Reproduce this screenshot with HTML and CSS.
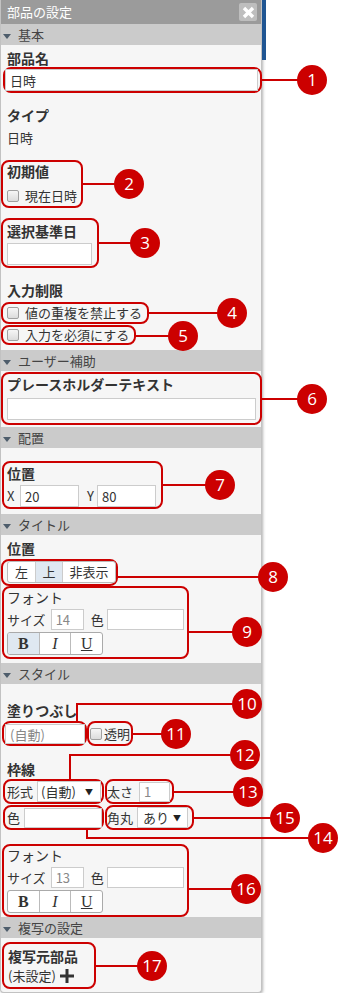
FILE: index.html
```html
<!DOCTYPE html>
<html lang="ja">
<head>
<meta charset="UTF-8">
<meta name="viewport" content="width=device-width, initial-scale=1.0">
<title>部品の設定</title>
<link rel="stylesheet" href="styles.css">
</head>
<body>

<div class="panel">
<div class="panel-title">
<span>部品の設定</span>
<span class="close"><svg width="13" height="13" viewBox="0 0 13 13"><path d="M2 2L11 11M11 2L2 11" stroke="#fff" stroke-width="3.4"/></svg></span>
</div>

<div class="sec-head"><i class="tri"></i>基本</div>
<div class="sec-body sb-basic">
<div class="label l-name">部品名</div>
<div class="mark m1">
<input class="text" value="日時">
<span class="co co1"><b>1</b></span>
</div>
<div class="label l-type">タイプ</div>
<div class="value">日時</div>
<div class="mark m2">
<div class="label">初期値</div>
<label class="check"><input type="checkbox">現在日時</label>
<span class="co co2"><b>2</b></span>
</div>
<div class="mark m3">
<div class="label">選択基準日</div>
<input class="text">
<span class="co co3"><b>3</b></span>
</div>
<div class="label l-limit">入力制限</div>
<div class="mark m4">
<label class="check"><input type="checkbox">値の重複を禁止する</label>
<span class="co co4"><b>4</b></span>
</div>
<div class="mark m5">
<label class="check"><input type="checkbox">入力を必須にする</label>
<span class="co co5"><b>5</b></span>
</div>
</div>

<div class="sec-head"><i class="tri"></i>ユーザー補助</div>
<div class="sec-body sb-help">
<div class="mark m6">
<div class="label">プレースホルダーテキスト</div>
<input class="text">
<span class="co co6"><b>6</b></span>
</div>
</div>

<div class="sec-head"><i class="tri"></i>配置</div>
<div class="sec-body sb-place">
<div class="mark m7">
<div class="label">位置</div>
<div class="xy">
<span class="xy-x">X</span><input class="text" value="20">
<span class="xy-y">Y</span><input class="text" value="80">
</div>
<span class="co co7"><b>7</b></span>
</div>
</div>

<div class="sec-head"><i class="tri"></i>タイトル</div>
<div class="sec-body sb-title">
<div class="label l-pos">位置</div>
<div class="mark m8">
<div class="seg">
<span>左</span><span class="on">上</span><span>非表示</span>
</div>
<span class="co co8"><b>8</b></span>
</div>
<div class="mark m9 font-box">
<div class="font-label">フォント</div>
<div class="size-row">
<span>サイズ</span><input class="text size" placeholder="14">
<span class="color-label">色</span><input class="text color">
</div>
<div class="biu">
<span class="on"><b>B</b></span><span><i>I</i></span><span><u>U</u></span>
</div>
<span class="co co9"><b>9</b></span>
</div>
</div>

<div class="sec-head"><i class="tri"></i>スタイル</div>
<div class="sec-body sb-style">
<div class="label l-fill">塗りつぶし</div>
<div class="pair">
<div class="mark m10">
<input class="text" placeholder="(自動)">
<span class="co-elbow co10"><b>10</b></span>
</div>
<div class="mark m11">
<label class="check"><input type="checkbox">透明</label>
<span class="co co11"><b>11</b></span>
</div>
</div>
<div class="label l-line">枠線</div>
<div class="pair p-line">
<div class="mark m12">
<span>形式</span><span class="select">(自動)<i>▼</i></span>
<span class="co-elbow co12"><b>12</b></span>
</div>
<div class="mark m13">
<span>太さ</span><input class="text weight" placeholder="1">
<span class="co co13"><b>13</b></span>
</div>
</div>
<div class="pair p-line">
<div class="mark m14">
<span>色</span><input class="text">
<span class="co-elbow co14"><b>14</b></span>
</div>
<div class="mark m15">
<span>角丸</span><span class="select">あり<i>▼</i></span>
<span class="co co15"><b>15</b></span>
</div>
</div>
<div class="mark m16 font-box">
<div class="font-label">フォント</div>
<div class="size-row">
<span>サイズ</span><input class="text size" placeholder="13">
<span class="color-label">色</span><input class="text color">
</div>
<div class="biu">
<span><b>B</b></span><span><i>I</i></span><span><u>U</u></span>
</div>
<span class="co co16"><b>16</b></span>
</div>
</div>

<div class="sec-head"><i class="tri"></i>複写の設定</div>
<div class="sec-body sb-copy">
<div class="mark m17">
<div class="label">複写元部品</div>
<div class="unset">(未設定)<svg width="16" height="16" viewBox="0 0 16 16"><path d="M8 1V15M1 8H15" stroke="#333" stroke-width="3"/></svg></div>
<span class="co co17"><b>17</b></span>
</div>
</div>
</div>

<div class="app-edge"></div>

</body>
</html>
```

FILE: styles.css
```css
* {
box-sizing: border-box;
}
body {
margin: 0;
display: flex;
align-items: flex-start;
background: #fff;
font-family: "Noto Sans CJK JP", "Noto Sans", sans-serif;
font-size: 13px;
line-height: 18px;
color: #333;
}
.panel {
width: 262px;
background: #f6f6f6;
border: 1px solid #c2c2c2;
border-top: 0;
border-radius: 0 0 4px 4px;
box-shadow: 1px 1px 3px rgba(0, 0, 0, 0.3);
}
.app-edge {
width: 4px;
height: 60px;
background: #1f5592;
}

/* title bar */
.panel-title {
height: 24px;
display: flex;
align-items: center;
justify-content: space-between;
padding: 0 4px 0 6px;
background: #9b9b9b;
color: #fff;
font-size: 13px;
}
.close {
width: 18px;
height: 18px;
display: flex;
align-items: center;
justify-content: center;
background: #bebebe;
border-radius: 2px;
}

/* section headers */
.sec-head {
height: 21px;
line-height: 21px;
padding-left: 2px;
background: #cbcbcb;
color: #444;
}
.tri {
display: inline-block;
width: 0;
height: 0;
border-left: 4px solid transparent;
border-right: 4px solid transparent;
border-top: 5px solid #4e5d6c;
margin-right: 7px;
vertical-align: middle;
}

.label {
font-weight: bold;
font-size: 14px;
line-height: 18px;
}
.sec-body > .label,
.sec-body > .value {
margin-left: 6px;
}
.text {
display: block;
height: 22px;
padding: 0 4px;
border: 1px solid #ccc;
background: #fff;
font: 13px "Noto Sans CJK JP", sans-serif;
color: #333;
outline: none;
}
.text::placeholder {
color: #888;
}
.check {
display: flex;
align-items: center;
gap: 6px;
}
.check input {
appearance: none;
margin: 0;
width: 12px;
height: 12px;
border: 1px solid #a0a0a0;
border-radius: 2px;
background: linear-gradient(#f6f6f6, #dcdcdc);
}

/* annotation boxes */
.mark {
position: relative;
border: 2px solid #c00;
border-radius: 8px;
}
.co {
position: absolute;
left: 100%;
top: 50%;
height: 2px;
margin: -1px 0 0 2px;
background: #c00;
}
.co-elbow {
position: absolute;
border: 0 solid #c00;
}
.co b,
.co-elbow b {
position: absolute;
right: -15px;
top: -14px;
width: 30px;
height: 30px;
border-radius: 50%;
background: #c00;
color: #fff;
font: normal 17px/30px "Open Sans", sans-serif;
text-align: center;
}

/* 基本 */
.l-name {
margin-top: 4px;
}
.m1 {
width: 259px;
margin-left: 2px;
padding-right: 2px;
}
.m1 .text {
width: 100%;
}
.co1 { width: 50px; }
.l-type {
margin-top: 13px;
}
.value {
margin-top: 5px;
}
.m2 {
width: 82px;
margin-top: 13px;
padding: 0 0 1px 4px;
}
.m2 .check {
margin-top: 7px;
}
.co2 { width: 46px; }
.m3 {
width: 98px;
margin-top: 10px;
padding: 2px 0 1px 4px;
}
.m3 .text {
width: 85px;
margin-top: 3px;
}
.co3 { width: 46px; }
.l-limit {
margin-top: 13px;
}
.m4 {
width: 148px;
margin-top: 3px;
padding-left: 4px;
}
.co4 { width: 83px; }
.m5 {
width: 135px;
margin-top: 1px;
padding-left: 4px;
}
.m5 .check {
height: 16px;
}
.co5 { width: 47px; margin-top: 0; }
.sb-basic {
padding-bottom: 5px;
}

/* ユーザー補助 */
.m6 {
width: 261px;
margin-top: 1px;
padding: 1px 0 3px 4px;
}
.m6 .text {
width: 249px;
margin-top: 5px;
}
.co6 { width: 50px; }
.sb-help {
padding-bottom: 2px;
}

/* 配置 */
.m7 {
width: 161px;
margin: 13px 0 0 1px;
padding: 1px 0 0 3px;
}
.xy {
display: flex;
align-items: center;
margin-top: 3px;
}
.xy .text {
width: 59px;
}
.xy-x {
width: 13px;
}
.xy-y {
width: 10px;
margin-left: 8px;
}
.co7 { width: 57px; }
.sb-place {
padding-bottom: 5px;
}

/* タイトル */
.l-pos {
margin-top: 4px;
}
.m8 {
width: 117px;
margin-top: 2px;
padding: 0 0 1px 4px;
}
.seg {
display: flex;
width: 109px;
height: 22px;
border: 1px solid #bbb;
border-radius: 3px;
background: #fff;
overflow: hidden;
}
.seg span {
width: 27px;
text-align: center;
line-height: 20px;
border-left: 1px solid #ccc;
}
.seg span:first-child {
border-left: 0;
}
.seg span:last-child {
width: 53px;
}
.seg .on,
.biu .on {
background: #dfe8f1;
}
.co8 { width: 155px; margin-top: 3px; }
.font-box {
width: 187px;
margin-left: 1px;
padding: 0 0 2px 3px;
}
.font-label {
font-size: 14px;
}
.size-row {
display: flex;
align-items: center;
height: 21px;
margin-top: 3px;
}
.size-row .text {
height: 21px;
}
.size-row .size {
width: 33px;
margin-left: 5px;
}
.color-label {
margin-left: 7px;
}
.size-row .color {
width: 77px;
margin-left: 3px;
}
.biu {
display: flex;
width: 96px;
height: 23px;
margin-top: 2px;
border: 1px solid #aaa;
border-radius: 3px;
background: #fff;
overflow: hidden;
font: 16px/21px "Liberation Serif", serif;
color: #333;
}
.biu span {
flex: 1;
text-align: center;
border-left: 1px solid #bbb;
}
.biu span:first-child {
border-left: 0;
}
.co9 { width: 58px; margin-top: 8px; }
.sb-title {
padding-bottom: 4px;
}

/* スタイル */
.l-fill {
margin-top: 17px;
}
.pair {
display: flex;
margin-top: 2px;
}
.m10 {
width: 85px;
margin-left: 1px;
padding: 1px 0 0 1px;
}
.m10 .text {
width: 80px;
height: 20px;
}
.co10 {
left: 72px;
bottom: calc(100% + 2px);
width: 171px;
height: 18px;
border-left-width: 2px;
border-top-width: 2px;
}
.co10 b {
top: -16px;
}
.m11 {
width: 46px;
display: flex;
align-items: center;
padding-left: 1px;
}
.m11 .check {
gap: 2px;
}
.co11 { width: 43px; }
.l-line {
margin-top: 14px;
}
.p-line {
margin-top: 1px;
}
.m12,
.m14 {
width: 101px;
margin-left: 2px;
display: flex;
align-items: center;
padding-left: 2px;
}
.m13,
.m15 {
margin-left: 1px;
display: flex;
align-items: center;
}
.m13 {
width: 69px;
}
.m15 {
width: 89px;
}
.select {
display: flex;
align-items: center;
justify-content: space-between;
height: 21px;
margin-left: 4px;
padding: 0 7px 0 3px;
border: 1px solid #ccc;
background: #fff;
}
.select i {
font-style: normal;
font-size: 8px;
color: #222;
}
.m12 .select {
width: 64px;
}
.m15 .select {
width: 51px;
padding-left: 5px;
padding-right: 6px;
}
.co12 {
left: 64px;
bottom: calc(100% + 2px);
width: 176px;
height: 25px;
border-left-width: 2px;
border-top-width: 2px;
}
.co12 b {
top: -16px;
}
.m13 .text {
width: 31px;
height: 20px;
margin-left: 6px;
}
.co13 { width: 74px; }
.m14 .text {
width: 78px;
height: 20px;
margin-left: 4px;
}
.co14 {
left: 81px;
top: calc(100% + 2px);
width: 237px;
height: 9px;
border-left-width: 2px;
border-bottom-width: 2px;
}
.co14 b {
top: auto;
bottom: -16px;
}
.co15 { width: 91px; }
.m16 {
margin-top: 14px;
}
.co16 { width: 57px; margin-top: 7px; }

/* 複写の設定 */
.m17 {
width: 94px;
margin: 4px 0 0 1px;
padding: 3px 0 2px 4px;
}
.unset {
display: flex;
align-items: center;
gap: 3px;
margin-top: 2px;
}
.co17 { width: 56px; }
.sb-copy {
padding-bottom: 3px;
}
```
